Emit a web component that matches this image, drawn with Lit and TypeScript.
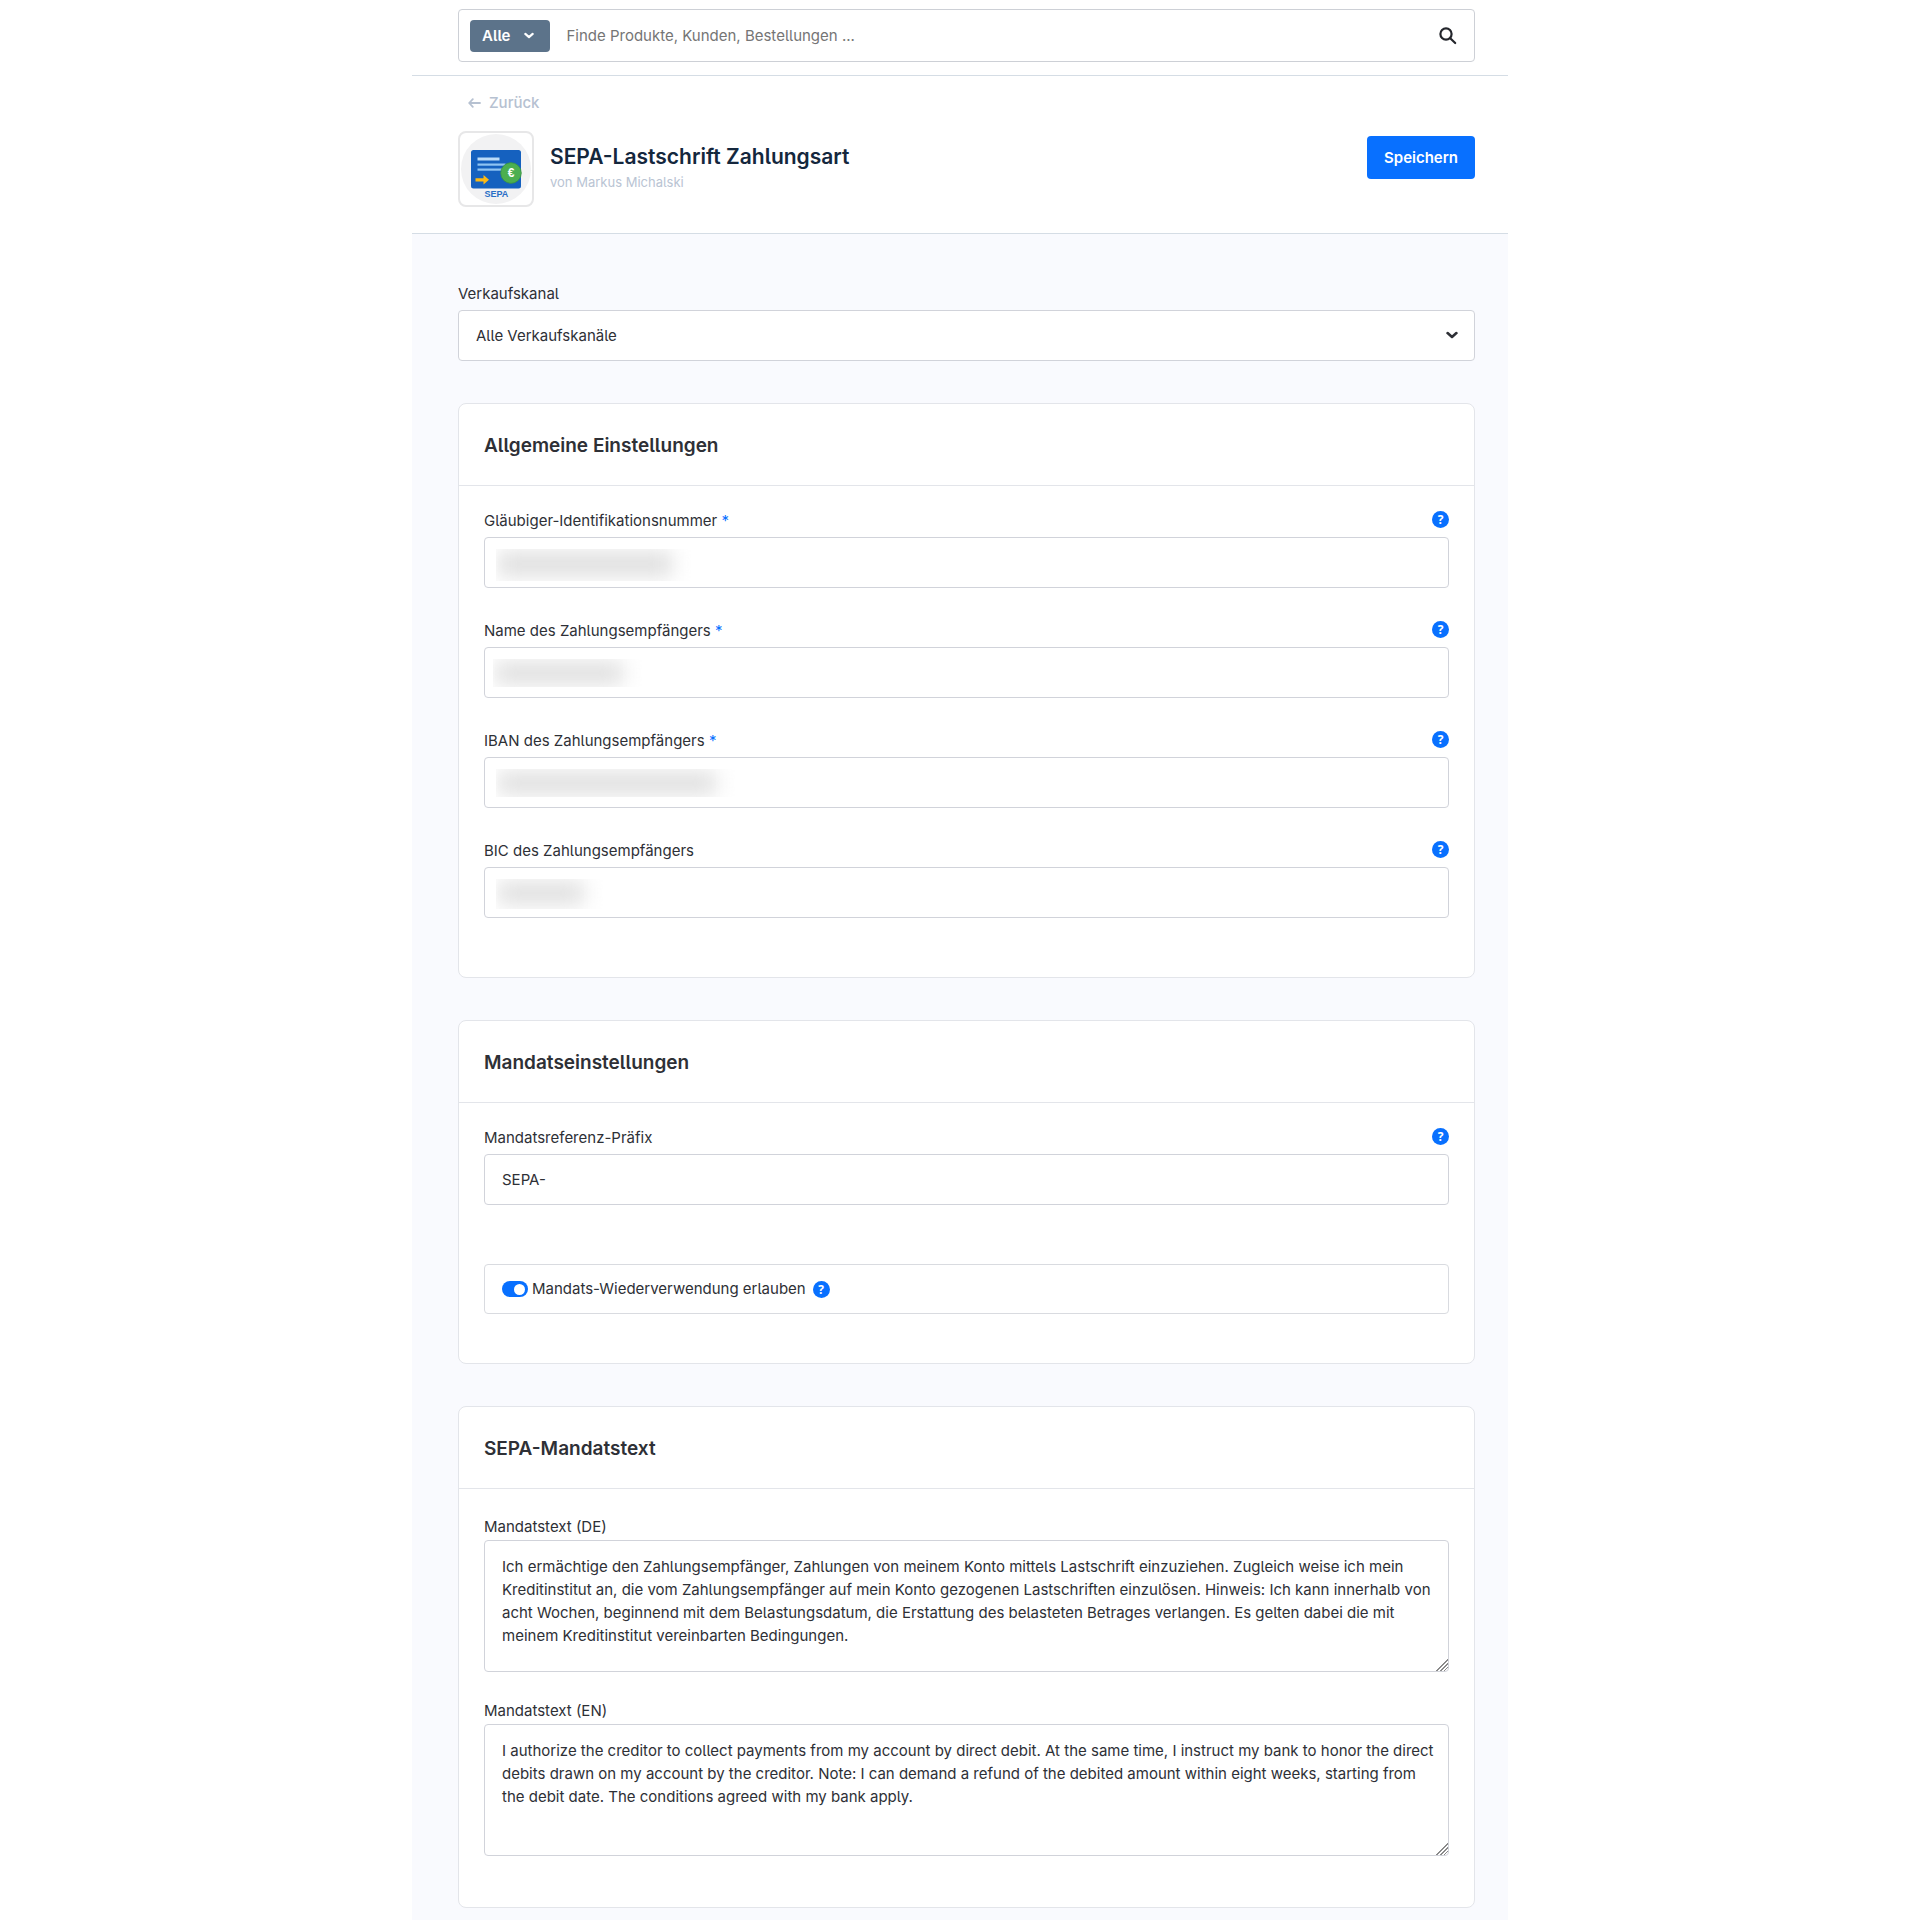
import { LitElement, html, css, svg, nothing } from "lit";
import { customElement, state } from "lit/decorators.js";

interface TextField {
  id: string;
  label: string;
  required: boolean;
  mask: string;
}

const CREDITOR_FIELDS: TextField[] = [
  { id: "creditor-id", label: "Gläubiger-Identifikationsnummer", required: true, mask: "mask-id" },
  { id: "creditor-name", label: "Name des Zahlungsempfängers", required: true, mask: "mask-name" },
  { id: "creditor-iban", label: "IBAN des Zahlungsempfängers", required: true, mask: "mask-iban" },
  { id: "creditor-bic", label: "BIC des Zahlungsempfängers", required: false, mask: "mask-bic" },
];

const MANDATE_DE =
  "Ich ermächtige den Zahlungsempfänger, Zahlungen von meinem Konto mittels Lastschrift einzuziehen. Zugleich weise ich mein Kreditinstitut an, die vom Zahlungsempfänger auf mein Konto gezogenen Lastschriften einzulösen. Hinweis: Ich kann innerhalb von acht Wochen, beginnend mit dem Belastungsdatum, die Erstattung des belasteten Betrages verlangen. Es gelten dabei die mit meinem Kreditinstitut vereinbarten Bedingungen.";

const MANDATE_EN =
  "I authorize the creditor to collect payments from my account by direct debit. At the same time, I instruct my bank to honor the direct debits drawn on my account by the creditor. Note: I can demand a refund of the debited amount within eight weeks, starting from the debit date. The conditions agreed with my bank apply.";

const chevron = svg`<path d="M1.600 1.600 L6 5.400 L10.400 1.600" fill="none" stroke="currentColor" stroke-width="2.600" stroke-linecap="round" stroke-linejoin="round"/>`;

@customElement("app-root")
export class AppRoot extends LitElement {
  @state() private reuse = true;

  static styles = css`
    :host {
      display: block;
      background: #fff;
      color: #2e3036;
      font-family: Inter, "Liberation Sans", sans-serif;
      font-feature-settings: "cv05";
      font-size: 15px;
      line-height: 22px;
    }
    * {
      box-sizing: border-box;
    }
    button,
    input,
    select,
    textarea {
      font: inherit;
      font-feature-settings: inherit;
      color: inherit;
      margin: 0;
    }
    .page {
      max-width: 1096px;
      min-height: 100vh;
      margin: 0 auto;
      background: #f9fafe;
    }
    .topbar {
      padding: 9px 33px 13px 46px;
      background: #fff;
      border-bottom: 1px solid #d5dde5;
    }
    .search {
      display: flex;
      align-items: center;
      height: 53px;
      padding: 0 16px 0 11px;
      border: 1px solid #cdd0d6;
      border-radius: 4px;
    }
    .scope {
      display: flex;
      align-items: center;
      gap: 14px;
      height: 32px;
      padding: 0 16px 0 12px;
      border: 0;
      border-radius: 4px;
      background: #5c738a;
      color: #fff;
      font-weight: 600;
    }
    .query {
      flex: 1;
      min-width: 0;
      height: 40px;
      padding: 0 16px;
      border: 0;
      outline: 0;
      background: none;
    }
    .query::placeholder {
      color: #757575;
      opacity: 1;
    }
    .go {
      display: flex;
      padding: 0;
      border: 0;
      background: none;
    }
    .head {
      padding: 16px 33px 26px 46px;
      background: #fff;
      border-bottom: 1px solid #d5dde5;
    }
    .back {
      display: inline-flex;
      align-items: center;
      gap: 8px;
      margin-left: 10px;
      color: #b6c1d1;
      font-weight: 500;
      text-decoration: none;
    }
    .head-row {
      display: flex;
      align-items: flex-start;
      gap: 16px;
      margin-top: 17px;
    }
    .logo {
      flex: none;
      width: 76px;
      height: 76px;
      border: 2px solid #e7e7e8;
      border-radius: 8px;
      background: #fff;
    }
    .logo svg {
      display: block;
    }
    .names {
      flex: 1;
      padding-top: 12px;
    }
    h1,
    h2 {
      margin: 0;
      font-weight: 600;
      font-optical-sizing: none;
      line-height: 28px;
    }
    h1 {
      color: #14273d;
      font-size: 21px;
    }
    .author {
      margin: 0;
      color: #b9c4d3;
      font-size: 13px;
    }
    .save {
      height: 43px;
      margin-top: 5px;
      padding: 0 17px;
      border: 0;
      border-radius: 4px;
      background: #0870ff;
      color: #fff;
      font-weight: 600;
    }
    .content {
      display: flex;
      flex-direction: column;
      gap: 42px;
      padding: 49px 33px 12px 46px;
    }
    .field {
      display: flex;
      flex-direction: column;
      gap: 5px;
    }
    .label-row {
      display: flex;
      align-items: flex-start;
      justify-content: space-between;
    }
    .star {
      color: #0870ff;
    }
    .box {
      position: relative;
      display: flex;
    }
    .control {
      width: 100%;
      height: 51px;
      padding: 0 17px;
      border: 1px solid #d1d3da;
      border-radius: 4px;
      background: #fff;
      outline: 0;
    }
    select.control {
      appearance: none;
    }
    .caret {
      position: absolute;
      right: 17px;
      top: 21px;
      pointer-events: none;
    }
    .card {
      border: 1px solid #e3e5ea;
      border-radius: 8px;
      background: #fff;
    }
    h2 {
      padding: 28px 25px 25px;
      border-bottom: 1px solid #e3e5ea;
      font-size: 19px;
    }
    .body {
      display: flex;
      flex-direction: column;
      gap: 32px;
      padding: 24px 25px 59px;
    }
    .body.mandate {
      gap: 59px;
      padding-bottom: 49px;
    }
    .body.texts {
      gap: 28px;
      padding: 27px 25px 51px;
    }
    .texts .field {
      gap: 2px;
    }
    .help {
      display: inline-flex;
      align-items: center;
      justify-content: center;
      width: 17px;
      height: 17px;
      padding: 0;
      border: 0;
      border-radius: 50%;
      background: #0870ff;
      color: #fff;
      font-family: "Open Sans", sans-serif;
      font-size: 12px;
      font-weight: 700;
      line-height: 17px;
    }
    .label-row .help {
      margin-top: 1px;
    }
    textarea.control {
      display: block;
      height: 132px;
      padding: 14px 7px 14px 17px;
      line-height: 23px;
      resize: vertical;
    }
    textarea::-webkit-resizer {
      background: linear-gradient(
          135deg,
          transparent 50%,
          #8a8a8a 50% 57%,
          transparent 57% 65%,
          #8a8a8a 65% 72%,
          transparent 72% 80%,
          #8a8a8a 80% 87%,
          transparent 87%
        )
        right bottom / 12px 12px no-repeat;
    }
    .switch-box {
      display: flex;
      align-items: center;
      height: 50px;
      padding: 0 17px;
      border: 1px solid #d9dbe0;
      border-radius: 4px;
    }
    .switch {
      appearance: none;
      display: flex;
      align-items: center;
      justify-content: flex-end;
      width: 26px;
      height: 16px;
      padding: 0 3px;
      margin-right: 4px;
      border-radius: 8px;
      background: #0870ff;
    }
    .switch:not(:checked) {
      justify-content: flex-start;
      background: #c2cad3;
    }
    .switch::before {
      content: "";
      width: 11px;
      height: 11px;
      border-radius: 50%;
      background: #fff;
    }
    .switch-box .help {
      margin-left: 7px;
    }
    .mask {
      position: absolute;
      left: 12px;
      top: 12px;
      height: 28px;
      overflow: hidden;
      pointer-events: none;
    }
    .mask::before {
      content: "";
      display: block;
      height: 22px;
      margin: 3px 30px 3px 2px;
      background: #dedede;
      filter: blur(10px);
    }
    .mask-id {
      width: 206px;
      height: 32px;
    }
    .mask-id::before {
      height: 24px;
    }
    .mask-name {
      left: 9px;
      width: 160px;
    }
    .mask-iban {
      width: 250px;
    }
    .mask-bic {
      width: 118px;
      height: 30px;
    }
  `;

  private help(label: string) {
    return html`<button class="help" type="button" aria-label="Hilfe: ${label}">?</button>`;
  }

  private textField(f: TextField) {
    return html`
      <div class="field">
        <div class="label-row">
          <label for=${f.id}>${f.label}${f.required ? html` <span class="star">*</span>` : nothing}</label>
          ${this.help(f.label)}
        </div>
        <div class="box">
          <input class="control" id=${f.id} type="text" />
          <span class="mask ${f.mask}"></span>
        </div>
      </div>
    `;
  }

  private textArea(id: string, label: string, value: string) {
    return html`
      <div class="field">
        <label for=${id}>${label}</label>
        <textarea class="control" id=${id} .value=${value}></textarea>
      </div>
    `;
  }

  private logo() {
    return html`
      <svg width="72" height="72" viewBox="0 0 72 72" role="img" aria-label="SEPA">
        <circle cx="36" cy="36" r="35" fill="#f2f2f3" />
        <rect x="11" y="17" width="50" height="38.500" rx="2.500" fill="#1561bf" />
        <rect x="17.500" y="24.500" width="22" height="3" fill="#bbdcf8" />
        <rect x="17.500" y="30.500" width="28" height="2.200" fill="#8fc4f2" />
        <rect x="17.500" y="35.500" width="25" height="2.200" fill="#8fc4f2" />
        <path d="M15.500 45.200h8v-3.200l5.500 4.800-5.500 4.800v-3.200h-8z" fill="#fdb913" />
        <circle cx="51" cy="40" r="10.300" fill="#4caf50" stroke="#3a9442" stroke-width="0.800" />
        <text x="51" y="44.200" text-anchor="middle" font-family="Liberation Sans, sans-serif" font-size="12" font-weight="700" fill="#fff">€</text>
        <text x="36.300" y="64" text-anchor="middle" font-family="Liberation Sans, sans-serif" font-size="9" font-weight="700" fill="#2a6fc6">SEPA</text>
      </svg>
    `;
  }

  render() {
    return html`
      <div class="page">
        <header class="topbar">
          <form class="search" role="search" @submit=${(e: Event) => e.preventDefault()}>
            <button class="scope" type="button">
              Alle
              <svg width="10" height="7" viewBox="0 0 12 7" aria-hidden="true">${chevron}</svg>
            </button>
            <input class="query" type="text" aria-label="Suche" placeholder="Finde Produkte, Kunden, Bestellungen ..." />
            <button class="go" type="submit" aria-label="Suchen">
              <svg width="20" height="20" viewBox="0 0 20 20" fill="none" stroke="#24262c" stroke-width="2.200" stroke-linecap="round" aria-hidden="true">
                <circle cx="8" cy="8" r="5.600" />
                <path d="M12.200 12.200 L17.200 17" />
              </svg>
            </button>
          </form>
        </header>

        <section class="head">
          <a class="back" href="#back">
            <svg width="13" height="10" viewBox="0 0 13 10" fill="none" stroke="currentColor" stroke-width="1.800" stroke-linecap="round" stroke-linejoin="round" aria-hidden="true">
              <path d="M12 5H1.200M4.800 1.200L1.200 5l3.600 3.800" />
            </svg>
            Zurück
          </a>
          <div class="head-row">
            <div class="logo">${this.logo()}</div>
            <div class="names">
              <h1>SEPA-Lastschrift Zahlungsart</h1>
              <p class="author">von Markus Michalski</p>
            </div>
            <button class="save" type="button">Speichern</button>
          </div>
        </section>

        <main class="content">
          <div class="field">
            <label for="channel">Verkaufskanal</label>
            <div class="box">
              <select class="control" id="channel">
                <option>Alle Verkaufskanäle</option>
              </select>
              <svg class="caret" width="12" height="8" viewBox="0 0 12 7" aria-hidden="true">${chevron}</svg>
            </div>
          </div>

          <section class="card">
            <h2>Allgemeine Einstellungen</h2>
            <div class="body">${CREDITOR_FIELDS.map((f) => this.textField(f))}</div>
          </section>

          <section class="card">
            <h2>Mandatseinstellungen</h2>
            <div class="body mandate">
              <div class="field">
                <div class="label-row">
                  <label for="prefix">Mandatsreferenz-Präfix</label>
                  ${this.help("Mandatsreferenz-Präfix")}
                </div>
                <input class="control" id="prefix" type="text" value="SEPA-" />
              </div>
              <div class="switch-box">
                <input
                  class="switch"
                  id="reuse"
                  type="checkbox"
                  .checked=${this.reuse}
                  @change=${(e: Event) => (this.reuse = (e.target as HTMLInputElement).checked)}
                />
                <label for="reuse">Mandats-Wiederverwendung erlauben</label>
                ${this.help("Mandats-Wiederverwendung erlauben")}
              </div>
            </div>
          </section>

          <section class="card">
            <h2>SEPA-Mandatstext</h2>
            <div class="body texts">
              ${this.textArea("text-de", "Mandatstext (DE)", MANDATE_DE)}
              ${this.textArea("text-en", "Mandatstext (EN)", MANDATE_EN)}
            </div>
          </section>
        </main>
      </div>
    `;
  }
}
